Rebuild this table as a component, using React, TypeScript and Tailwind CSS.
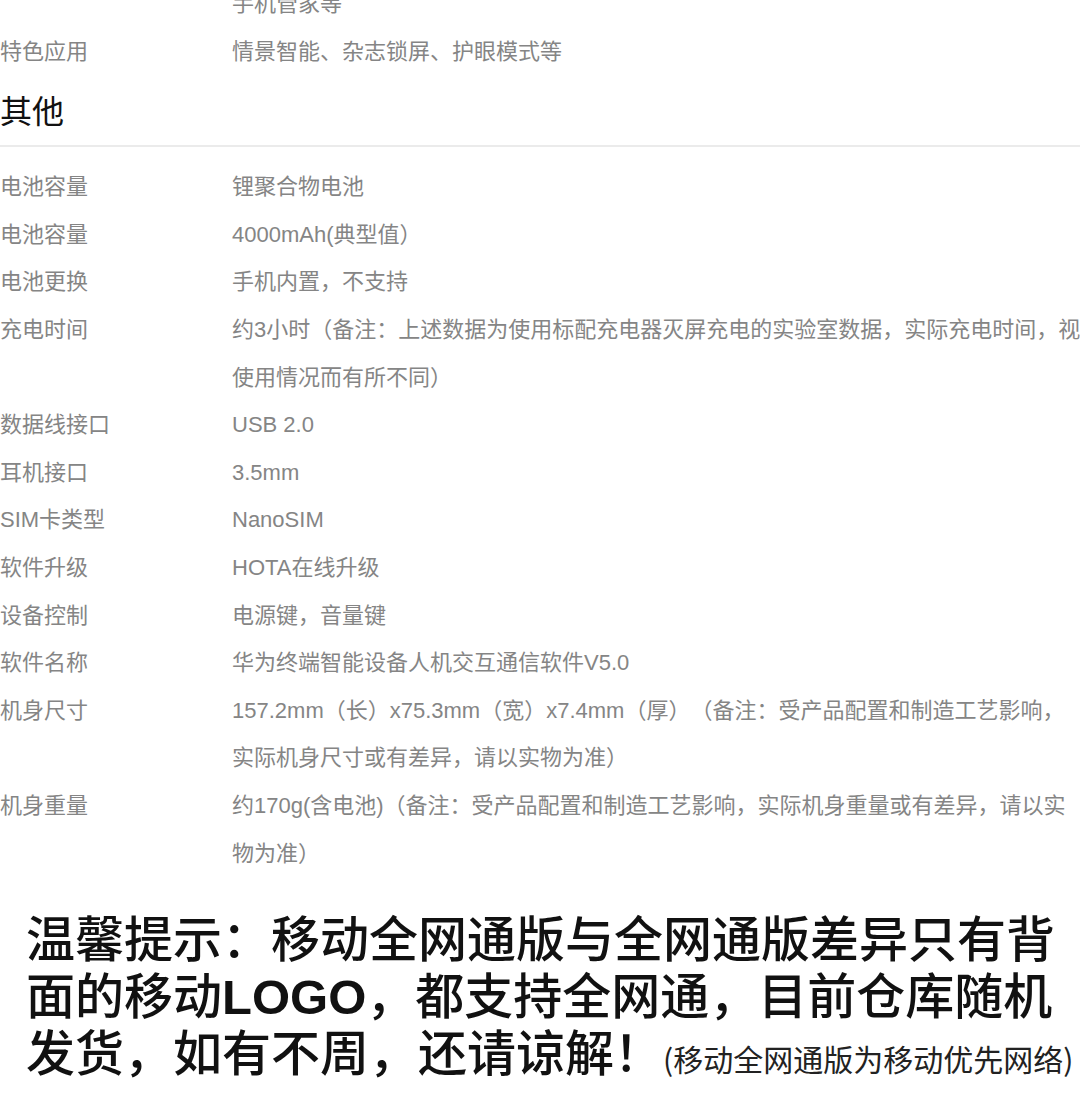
const rows: { label: string; value: string }[] = [
  { label: "电池容量", value: "锂聚合物电池" },
  { label: "电池容量", value: "4000mAh(典型值）" },
  { label: "电池更换", value: "手机内置，不支持" },
  {
    label: "充电时间",
    value: "约3小时（备注：上述数据为使用标配充电器灭屏充电的实验室数据，实际充电时间，视使用情况而有所不同）",
  },
  { label: "数据线接口", value: "USB 2.0" },
  { label: "耳机接口", value: "3.5mm" },
  { label: "SIM卡类型", value: "NanoSIM" },
  { label: "软件升级", value: "HOTA在线升级" },
  { label: "设备控制", value: "电源键，音量键" },
  { label: "软件名称", value: "华为终端智能设备人机交互通信软件V5.0" },
  {
    label: "机身尺寸",
    value: "157.2mm（长）x75.3mm（宽）x7.4mm（厚）（备注：受产品配置和制造工艺影响，实际机身尺寸或有差异，请以实物为准）",
  },
  {
    label: "机身重量",
    value: "约170g(含电池)（备注：受产品配置和制造工艺影响，实际机身重量或有差异，请以实物为准）",
  },
]

function SpecRow({ label, value }: { label: string; value: string }) {
  return (
    <div className="grid grid-cols-[232px_851px] text-[22px] leading-[47.6px] text-[#858585]">
      <div className="whitespace-nowrap">{label}</div>
      <div>{value}</div>
    </div>
  )
}

export default function App() {
  return (
    <div
      className="w-full overflow-hidden bg-white [text-spacing-trim:space-all]"
      style={{ fontFamily: '"Liberation Sans", "Noto Sans CJK SC", sans-serif' }}
    >
      <div className="w-[1083px] pb-4">
        {/* tail of the previous section */}
        <div className="-mt-[20px]">
          <SpecRow label="" value="手机管家等" />
          <SpecRow label="特色应用" value="情景智能、杂志锁屏、护眼模式等" />
        </div>

        {/* Section header */}
        <h2 className="mt-[17px] text-[32px] leading-[40px] font-normal text-[#111]">其他</h2>
        <div className="mt-[13px] h-[2px] w-[1080px] bg-[#ebebeb]" />

        <div className="mt-[16px]">
          {rows.map((r, i) => (
            <SpecRow key={i} label={r.label} value={r.value} />
          ))}
        </div>

        {/* Notice */}
        <div
          className="mt-[31px] pl-[26px] text-[49px] leading-[56.5px] font-medium text-[#111] whitespace-nowrap"
          style={{ fontFamily: '"Noto Sans CJK SC", sans-serif' }}
        >
          <div>温馨提示：移动全网通版与全网通版差异只有背</div>
          <div>
            面的移动
            <span className="font-bold leading-none" style={{ fontFamily: '"Liberation Sans", sans-serif' }}>
              LOGO
            </span>
            ，都支持全网通，目前仓库随机
          </div>
          <div>
            发货，如有不周，还请谅解！
            <span className="text-[30px] leading-none font-normal text-[#222]">(移动全网通版为移动优先网络)</span>
          </div>
        </div>
      </div>
    </div>
  )
}
